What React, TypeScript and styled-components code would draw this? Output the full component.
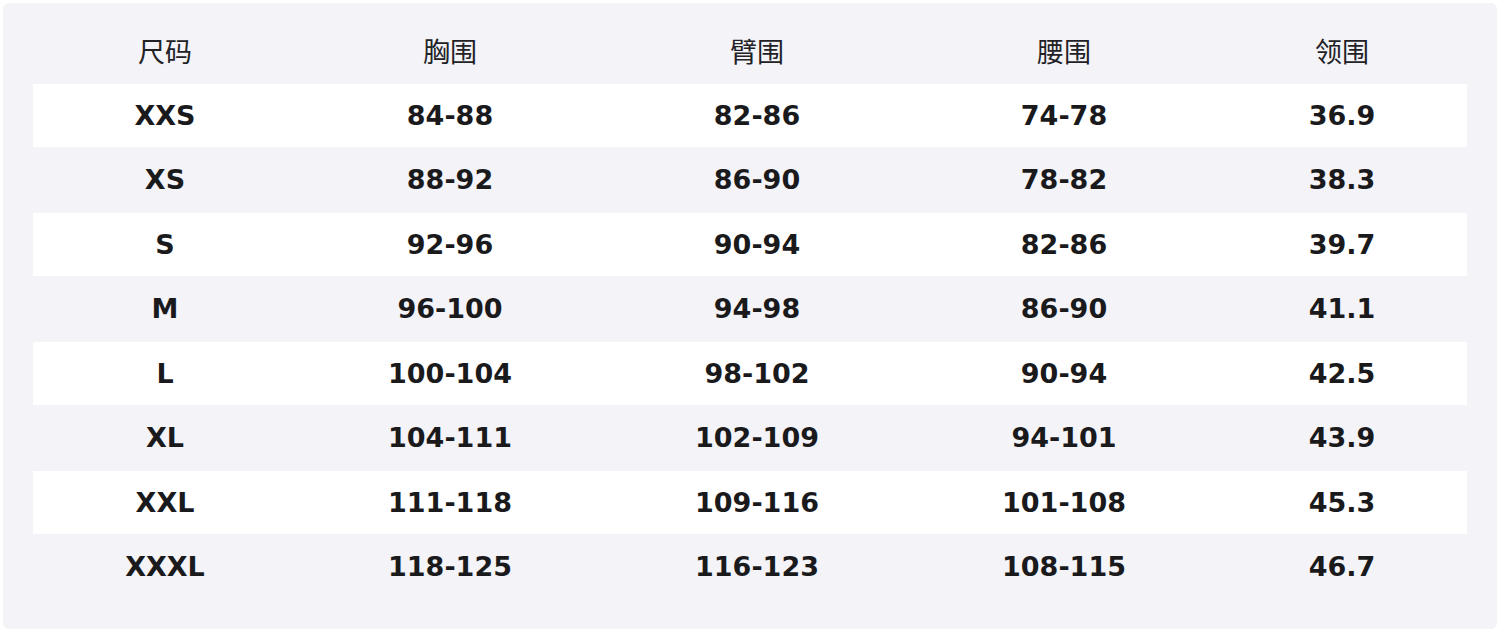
import React from "react";
import styled, { createGlobalStyle } from "styled-components";

const Global = createGlobalStyle`
  html, body { margin: 0; padding: 0; background: #ffffff; }
  #root { width: 1500px; height: 632px; }
`;

const Page = styled.div`
  width: 1500px;
  height: 632px;
  padding: 3px;
  box-sizing: border-box;
`;

const Panel = styled.div`
  height: 100%;
  box-sizing: border-box;
  background: #f3f3f8;
  border-radius: 6px;
  padding: 0 30px;
`;

const Grid = styled.div`
  display: grid;
  grid-template-columns: 264px 306px 308px 306px 250px;
`;

const HeaderRow = styled.div`
  display: contents;
`;

const HeadCell = styled.div`
  height: 81px;
  padding-top: 14px;
  box-sizing: border-box;
  display: flex;
  align-items: center;
  justify-content: center;
  font-family: "Noto Sans CJK SC", "Noto Sans", sans-serif;
  font-size: 27px;
  font-weight: 400;
  color: #222226;
`;

const Cell = styled.div<{ $alt: boolean }>`
  height: 64.5px;
  box-sizing: border-box;
  border-bottom: 2px solid transparent;
  background-clip: padding-box;
  display: flex;
  align-items: center;
  justify-content: center;
  background-color: ${(p) => (p.$alt ? "#ffffff" : "transparent")};
  font-family: "DejaVu Sans", "Noto Sans", sans-serif;
  font-weight: 700;
  font-size: 27px;
  color: #1a1a1d;
`;

const headers = ["尺码", "胸围", "臂围", "腰围", "领围"];
const rows = [
  ["XXS", "84-88", "82-86", "74-78", "36.9"],
  ["XS", "88-92", "86-90", "78-82", "38.3"],
  ["S", "92-96", "90-94", "82-86", "39.7"],
  ["M", "96-100", "94-98", "86-90", "41.1"],
  ["L", "100-104", "98-102", "90-94", "42.5"],
  ["XL", "104-111", "102-109", "94-101", "43.9"],
  ["XXL", "111-118", "109-116", "101-108", "45.3"],
  ["XXXL", "118-125", "116-123", "108-115", "46.7"],
];

export default function App() {
  return (
    <Page>
      <Global />
      <Panel>
        <Grid>
          <HeaderRow>
            {headers.map((h) => (
              <HeadCell key={h}>{h}</HeadCell>
            ))}
          </HeaderRow>
          {rows.map((r, i) =>
            r.map((v, j) => (
              <Cell key={`${i}-${j}`} $alt={i % 2 === 0}>
                {v}
              </Cell>
            ))
          )}
        </Grid>
      </Panel>
    </Page>
  );
}
